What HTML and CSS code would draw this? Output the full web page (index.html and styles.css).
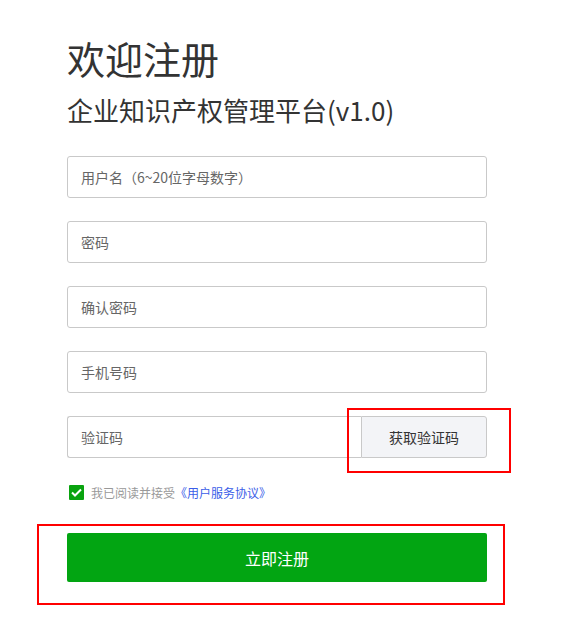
FILE: index.html
```html
<!DOCTYPE html>
<html lang="zh">
<head>
<meta charset="utf-8">
<link rel="stylesheet" href="styles.css">
</head>
<body>
<div class="page">
  <h1 class="title">欢迎注册</h1>
  <h2 class="subtitle">企业知识产权管理平台(v1.0)</h2>
  <form class="form">
    <div class="field"><input class="input" placeholder="用户名（6~20位字母数字）"></div>
    <div class="field"><input class="input" placeholder="密码"></div>
    <div class="field"><input class="input" placeholder="确认密码"></div>
    <div class="field"><input class="input" placeholder="手机号码"></div>
    <div class="field code-row">
      <input class="input code-input" placeholder="验证码">
      <button type="button" class="code-btn">获取验证码</button>
      <span class="mark mark-code"></span>
    </div>
    <label class="agree">
      <span class="check"><svg width="11" height="9" viewBox="0 0 11 9"><path d="M1 4.5 L4 7.5 L10 1.5" fill="none" stroke="#fff" stroke-width="2"/></svg></span>
      <span class="agree-text">我已阅读并接受</span><a class="agree-link">《用户服务协议》</a>
    </label>
    <div class="submit-wrap">
      <button type="button" class="submit">立即注册</button>
      <span class="mark mark-submit"></span>
    </div>
  </form>
</div>
</body>
</html>
```
FILE: styles.css
```css
* { box-sizing: border-box; }
body {
  margin: 0;
  background: #fff;
  font-family: "Noto Sans CJK SC", "Microsoft YaHei", sans-serif;
  color: #333;
}
.page {
  padding: 30px 0 40px 67px;
  width: 487px;
}
.title {
  margin: 0;
  font-size: 38px;
  font-weight: 400;
  line-height: 56px;
  color: #333;
}
.subtitle {
  margin: 4px 0 0;
  font-size: 26px;
  font-weight: 400;
  line-height: 40px;
  color: #333;
}
.form {
  margin-top: 26px;
  display: flex;
  flex-direction: column;
}
.field {
  height: 42px;
  margin-bottom: 23px;
  display: flex;
}
.input {
  flex: 1;
  height: 42px;
  border: 1px solid #c9c9c9;
  border-radius: 3px;
  padding: 0 13px;
  font-family: inherit;
  font-size: 14px;
  color: #333;
  outline: none;
  text-spacing-trim: space-all;
}
.input::placeholder {
  color: #666;
  text-spacing-trim: space-all;
  font-feature-settings: "halt" 0;
}
.code-row { position: relative; }
.code-input {
  border-radius: 3px 0 0 3px;
  border-right: none;
}
.code-btn {
  width: 126px;
  height: 42px;
  border: 1px solid #c9c9c9;
  border-radius: 0 3px 3px 0;
  background: #f3f4f7;
  font-family: inherit;
  font-size: 14px;
  color: #333;
  padding: 0;
}
.mark {
  position: absolute;
  border: 2px solid #f00;
}
.mark-code {
  left: 280px;
  top: -8px;
  width: 164px;
  height: 65px;
}
.agree {
  display: flex;
  align-items: center;
  height: 20px;
  margin-top: 1px;
  padding-left: 2px;
  font-size: 12px;
}
.check {
  width: 15px;
  height: 15px;
  background: #09a30f;
  border-radius: 1px;
  display: flex;
  align-items: center;
  justify-content: center;
  margin-right: 7px;
}
.agree-text { color: #999; }
.agree-link { color: #3a5de8; }
.submit-wrap {
  position: relative;
  margin-top: 31px;
  height: 49px;
}
.submit {
  width: 420px;
  height: 49px;
  border: none;
  border-radius: 2px;
  background: #02a512;
  color: #fff;
  font-family: inherit;
  font-size: 16px;
}
.mark-submit {
  left: -30px;
  top: -9px;
  width: 468px;
  height: 81px;
}
```
